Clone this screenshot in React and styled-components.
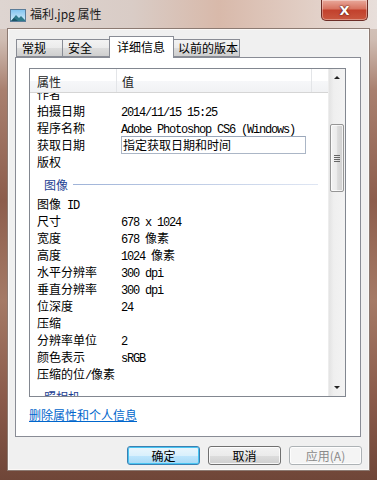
import React from 'react'
import styled, { createGlobalStyle } from 'styled-components'

const GlobalStyle = createGlobalStyle`
body{
  margin: 0;
  font-family: "Noto Sans CJK SC", "Liberation Sans", sans-serif;
  font-size: 12px;
}
`;

const Window = styled.div`
width: 377px;
height: 480px;
display: flex;
flex-direction: column;
overflow: hidden;
background: linear-gradient(to bottom, #d8ccc6 0, #cfbcb2 40px, #a9806f 90px, #8d5d4c 200px, #a57a66 300px, #8a5a4a 400px, #6f4638 480px);
`;

const TitleBar = styled.div`
height: 29px;
flex: none;
display: flex;
align-items: flex-start;
background: linear-gradient(to right, #ded5d1 0%, #d9ccc6 35%, #d8b9aa 58%, #e0cbc1 78%, #e8dfdb 100%);
`;

const TitleIcon = styled.svg`
width: 16px;
height: 13px;
margin: 9px 0 0 10px;
`;

const Title = styled.span`
margin: 6px 0 0 4px;
font-size: 12px;
line-height: 16px;
color: #1a1a1a;
`;

const CloseButton = styled.div`
margin: 0 9px 0 auto;
width: 45px;
height: 20px;
border: 1px solid #6d2c25;
border-top: none;
border-radius: 0 0 5px 5px;
background: linear-gradient(to bottom, #e9a99b 0, #d7725f 45%, #c2402c 50%, #c9573f 100%);
box-shadow: inset 0 0 0 1px rgba(255,255,255,0.35);
display: flex;
align-items: center;
justify-content: center;
color: #fff;
font-family: "DejaVu Sans", sans-serif;
font-weight: bold;
font-size: 13px;
text-shadow: 0 0 2px #5a1a12, 0 0 1px #5a1a12;
`;

const Client = styled.div`
flex: 1;
margin: 0 8px 10px 8px;
background: #f0f0f0;
border: 1px solid #fbf8f6;
box-shadow: 0 0 0 1px #8c7a72;
display: flex;
flex-direction: column;
`;

const TabRow = styled.div`
height: 27px;
display: flex;
align-items: flex-end;
padding-left: 7px;
`;

const Tab = styled.div`
width: ${p => p.w}px;
height: ${p => (p.active ? 22 : 18)}px;
margin: ${p => (p.active ? '0 -1px -1px -1px' : '0')};
padding-left: ${p => (p.active ? 7 : 5)}px;
box-sizing: border-box;
border: 1px solid #898c95;
border-bottom: ${p => (p.active ? 'none' : '1px solid #898c95')};
border-left: ${p => (p.first || p.active ? '1px solid #898c95' : 'none')};
background: ${p => (p.active ? '#fff' : 'linear-gradient(to bottom, #f3f3f3 0, #ebebeb 50%, #dddddd 51%, #cfcfcf 100%)')};
position: relative;
z-index: ${p => (p.active ? 2 : 1)};
font-size: 12px;
line-height: ${p => (p.active ? 19 : 16)}px;
color: #000;
white-space: nowrap;
`;

const Panel = styled.div`
height: 380px;
margin: 0 7px 0 6px;
box-sizing: border-box;
border: 1px solid #898c95;
background: #fff;
padding: 10px 14px 0 13px;
display: flex;
flex-direction: column;
`;

const ListBox = styled.div`
height: 329px;
box-sizing: border-box;
border: 1px solid #828790;
display: flex;
`;

const ListMain = styled.div`
flex: 1;
display: flex;
flex-direction: column;
overflow: hidden;
`;

const Header = styled.div`
height: 23px;
flex: none;
display: flex;
background: linear-gradient(to bottom, #ffffff 0, #ffffff 50%, #f6f7f9 51%, #f1f2f4 100%);
border-bottom: 1px solid #d5d5d5;
position: relative;
z-index: 1;
`;

const HeadCell = styled.div`
width: ${p => p.w}px;
flex: ${p => (p.w ? 'none' : 1)};
box-sizing: border-box;
padding-left: ${p => p.pad}px;
border-right: ${p => (p.w ? '1px solid #e3e5e8' : 'none')};
line-height: 25px;
color: #222;
`;

const Body = styled.div`
flex: 1;
overflow: hidden;
`;

const Rows = styled.div`
margin-top: -8px;
`;

const Row = styled.div`
height: 17px;
display: flex;
align-items: center;
color: #000;
`;

const Label = styled.div`
width: 87px;
flex: none;
box-sizing: border-box;
padding-left: 7px;
white-space: nowrap;
`;

const Value = styled.div`
padding-left: 4px;
white-space: nowrap;
`;

const EditBox = styled.div`
margin-left: 4px;
width: 185px;
height: 18px;
box-sizing: border-box;
border: 1px solid #abb6c6;
border-top-color: #9aa7ba;
padding-left: 1px;
line-height: 16px;
`;

const Latin = styled.span`
font-family: "Liberation Mono", monospace;
font-size: 12px;
letter-spacing: -1.2px;
`;

const Group = styled.div`
height: 25px;
display: flex;
align-items: center;
padding: 3px 0 0 14px;
box-sizing: border-box;
color: #1e3f93;
&::after{
  content: '';
  flex: 1;
  height: 1px;
  margin: 1px 10px 0 5px;
  background: linear-gradient(to right, #9fb3d8, #dfe6f3);
}
`;

const ScrollBar = styled.div`
width: 16px;
flex: none;
display: flex;
flex-direction: column;
background: linear-gradient(to right, #e3e3e3 0, #efefef 30%, #f3f3f3 100%);
border-left: 1px solid #ededed;
`;

const ScrollArrow = styled.div`
height: 17px;
flex: none;
display: flex;
align-items: center;
justify-content: center;
&::before{
  content: '';
  border-left: 3px solid transparent;
  border-right: 3px solid transparent;
  ${p => (p.down ? 'border-top: 3px solid #222;' : 'border-bottom: 3px solid #222;')}
}
`;

const Track = styled.div`
flex: 1;
`;

const Thumb = styled.div`
margin: 38px 1px 0 1px;
height: 68px;
box-sizing: border-box;
border: 1px solid #959595;
border-radius: 2px;
background: linear-gradient(to right, #f2f2f2 0, #ececec 45%, #dcdcdc 55%, #cfcfcf 100%);
box-shadow: inset 0 0 0 1px rgba(255,255,255,0.7);
display: flex;
flex-direction: column;
align-items: center;
justify-content: center;
gap: 1px;
`;

const Grip = styled.div`
width: 6px;
height: 1px;
background: #666;
`;

const Link = styled.a`
margin-top: 10px;
align-self: flex-start;
color: #0066cc;
text-decoration: underline;
line-height: 16px;
cursor: pointer;
`;

const ButtonRow = styled.div`
display: flex;
justify-content: flex-end;
gap: 8px;
padding: 9px 6px 0 0;
`;

const Button = styled.div`
width: 73px;
height: 19px;
box-sizing: border-box;
border: 1px solid ${p => (p.primary ? '#3c7fb1' : p.disabled ? '#adb2b5' : '#707070')};
border-radius: 3px;
background: ${p => (p.disabled ? '#f4f4f4' : p.primary ? 'linear-gradient(to bottom, #eaf6fd 0, #d9f0fc 50%, #bee6fd 51%, #a7d9f5 100%)' : 'linear-gradient(to bottom, #f2f2f2 0, #ebebeb 50%, #dddddd 51%, #cfcfcf 100%)')};
box-shadow: ${p => (p.primary ? 'inset 0 0 0 1px #48c5f2' : 'inset 0 0 0 1px rgba(255,255,255,0.8)')};
color: ${p => (p.disabled ? '#8a8a8a' : '#000')};
text-align: center;
line-height: 17px;
font-size: 12px;
`;

const rowsTop = [
  ['作者', ''],
  ['拍摄日期', '2014/11/15 15:25'],
  ['程序名称', 'Adobe Photoshop CS6 (Windows)'],
  ['获取日期', null],
  ['版权', ''],
];

const rowsImage = [
  ['图像 ID', ''],
  ['尺寸', '678 x 1024'],
  ['宽度', '678 像素'],
  ['高度', '1024 像素'],
  ['水平分辨率', '300 dpi'],
  ['垂直分辨率', '300 dpi'],
  ['位深度', '24'],
  ['压缩', ''],
  ['分辨率单位', '2'],
  ['颜色表示', 'sRGB'],
  ['压缩的位/像素', ''],
];

// CJK runs stay in the CJK font, everything else gets the narrow mono face
const Mixed = ({ text }) =>
  text.split(/([\u3000-\u9fff]+)/).filter(Boolean).map((part, i) =>
    /[\u3000-\u9fff]/.test(part) ? <span key={i}>{part}</span> : <Latin key={i}>{part}</Latin>
  );

const PropRow = ({ label, value }) => (
  <Row>
    <Label><Mixed text={label} /></Label>
    {value === null
      ? <EditBox>指定获取日期和时间</EditBox>
      : <Value><Mixed text={value} /></Value>}
  </Row>
);

const FileIcon = () => (
  <TitleIcon viewBox="0 0 16 13">
    <defs>
      <linearGradient id="sky" x1="0" y1="0" x2="0" y2="1">
        <stop offset="0" stopColor="#7fc3ef" />
        <stop offset="1" stopColor="#d8eefb" />
      </linearGradient>
    </defs>
    <rect x="0.5" y="0.5" width="15" height="12" fill="url(#sky)" stroke="#5b7c99" />
    <path d="M1 12 L6 6 L9 9 L11 7 L15 11 L15 12 Z" fill="#2f7a8c" />
    <path d="M1 12 L4 9 L8 12 Z" fill="#1d5566" />
  </TitleIcon>
);

export default function App() {
  return (
    <>
      <GlobalStyle />
      <Window>
        <TitleBar>
          <FileIcon />
          <Title>福利.jpg 属性</Title>
          <CloseButton>X</CloseButton>
        </TitleBar>
        <Client>
          <TabRow>
            <Tab w={47} first>常规</Tab>
            <Tab w={47}>安全</Tab>
            <Tab w={65} active>详细信息</Tab>
            <Tab w={67}>以前的版本</Tab>
          </TabRow>
          <Panel>
            <ListBox>
              <ListMain>
                <Header>
                  <HeadCell w={87} pad={7}>属性</HeadCell>
                  <HeadCell w={195} pad={5}>值</HeadCell>
                  <HeadCell pad={0} />
                </Header>
                <Body>
                  <Rows>
                    {rowsTop.map(([l, v]) => <PropRow key={l} label={l} value={v} />)}
                    <Group>图像</Group>
                    {rowsImage.map(([l, v]) => <PropRow key={l} label={l} value={v} />)}
                    <Group>照相机</Group>
                  </Rows>
                </Body>
              </ListMain>
              <ScrollBar>
                <ScrollArrow />
                <Track>
                  <Thumb>
                    <Grip />
                    <Grip />
                    <Grip />
                    <Grip />
                  </Thumb>
                </Track>
                <ScrollArrow down />
              </ScrollBar>
            </ListBox>
            <Link>删除属性和个人信息</Link>
          </Panel>
          <ButtonRow>
            <Button primary>确定</Button>
            <Button>取消</Button>
            <Button disabled>应用(A)</Button>
          </ButtonRow>
        </Client>
      </Window>
    </>
  )
}
